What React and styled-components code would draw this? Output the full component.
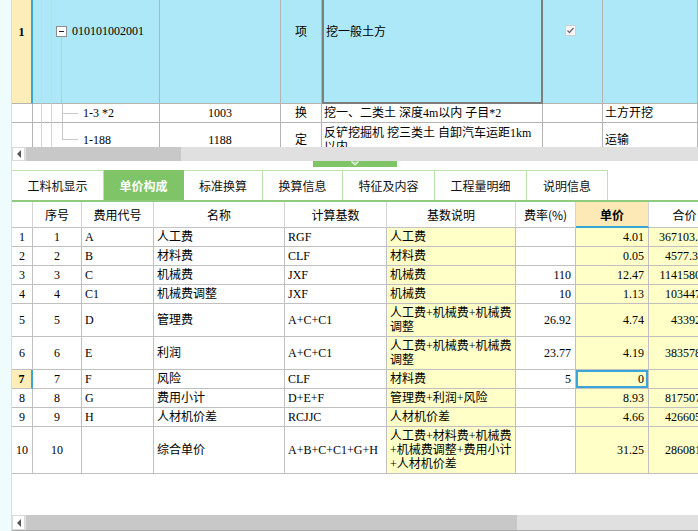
import React from 'react';
import styled, { createGlobalStyle, css } from 'styled-components';

const GlobalStyle = createGlobalStyle`
  html, body {
    margin: 0;
    padding: 0;
    background: #fff;
  }
  body {
    font-family: "Liberation Serif", "Noto Sans CJK SC", serif;
    font-size: 12px;
    color: #000;
  }
`;

const Screen = styled.div`
  display: flex;
  width: 698px;
  height: 531px;
  overflow: hidden;
`;

const SideStrip = styled.div`
  flex: none;
  width: 11px;
  background: #effcfd;
  border-right: 1px solid #d3dfe2;
`;

const Workspace = styled.div`
  flex: 1;
  min-width: 0;
  display: flex;
  flex-direction: column;
  overflow: hidden;
`;

/* ---------- upper tree grid ---------- */

const TopGrid = styled.div`
  flex: none;
  height: 147px;
  overflow: hidden;
`;

const TreeRow = styled.div`
  display: grid;
  grid-template-columns: 21px 9px 10px 108px 121px 41px 221px 60px 95px;
  height: ${p => p.$h}px;
  background: ${p => (p.$selected ? '#ade8f8' : '#fff')};
`;

const TCell = styled.div`
  display: flex;
  align-items: ${p => (p.$top ? 'flex-start' : 'center')};
  justify-content: ${p => (p.$center ? 'center' : 'flex-start')};
  padding: ${p => (p.$top ? '25px 2px 0' : '0 2px')};
  line-height: 14px;
  white-space: pre-line;
  overflow: hidden;
  border-right: 1px solid ${p => (p.$faint ? '#d4d4d4' : '#b4b4b4')};
  border-bottom: 1px solid #b4b4b4;
`;

const TreeRowHead = styled(TCell)`
  justify-content: center;
  padding: ${p => (p.$top ? '25px 0 0' : '0')};
  ${p => p.$current && css`
    background: #fdedb8;
    font-weight: bold;
    border-right: 2px solid #3aa6d8;
  `}
`;

const NameCell = styled(TCell)`
  ${p => p.$focused && css`
    border-left: 2px solid #7d7d7d;
    border-right: 2px solid #7d7d7d;
    border-bottom: 2px solid #7d7d7d;
  `}
`;

const CodeCell = styled.div`
  display: flex;
  align-items: ${p => (p.$top ? 'flex-start' : 'center')};
  padding-top: ${p => (p.$top ? 26 : 0)}px;
  border-right: 1px solid #b4b4b4;
  border-bottom: 1px solid #b4b4b4;
  overflow: hidden;
`;

const Expander = styled.div`
  align-self: stretch;
  display: flex;
  flex-direction: column;
  align-items: center;
  width: 11px;
  margin-left: 4px;
`;

const ToggleBox = styled.span`
  flex: none;
  display: flex;
  align-items: center;
  justify-content: center;
  width: 11px;
  height: 11px;
  box-sizing: border-box;
  border: 1px solid #8e8e8e;
  background: #fff;

  &::before {
    content: '';
    width: 5px;
    height: 1px;
    background: #222;
  }
`;

const Stem = styled.span`
  flex: 1;
  width: 1px;
  background: #c8c8c8;
`;

const Branch = styled.span`
  align-self: stretch;
  display: flex;
  flex-direction: column;
  width: 16px;
  margin-left: 10px;

  &::before {
    content: '';
    flex: 1;
    border-left: 1px solid #c8c8c8;
    border-bottom: 1px solid #c8c8c8;
  }
  &::after {
    content: '';
    flex: 1;
    border-left: 1px solid ${p => (p.$last ? 'transparent' : '#c8c8c8')};
  }
`;

const CodeText = styled.span`
  margin-left: ${p => p.$gap}px;
  line-height: ${p => (p.$top ? 11 : 14)}px;
  white-space: nowrap;
`;

const CheckCell = styled(TCell)`
  align-items: flex-start;
  justify-content: center;
  padding: 25px 4px 0 0;
`;

/* ---------- scrollbars / splitter ---------- */

const HScroll = styled.div`
  flex: none;
  display: flex;
  height: ${p => p.$h}px;
  background: #e0e0e0;
  border-bottom: ${p => (p.$edge ? '1px solid #a9a9a9' : 'none')};
`;

const ScrollArrow = styled.div`
  flex: none;
  display: flex;
  align-items: center;
  justify-content: center;
  width: 13px;
  box-sizing: border-box;
  background: #fff;
  border: 1px solid #dadada;

  &::before {
    content: '';
    border-right: 4px solid #555;
    border-top: 4px solid transparent;
    border-bottom: 4px solid transparent;
  }
`;

const ScrollThumb = styled.div`
  flex: none;
  width: ${p => p.$w}px;
  margin-left: 1px;
  background: #c8c8c8;
`;

const SplitterZone = styled.div`
  flex: none;
  display: flex;
  justify-content: center;
  height: 9px;
`;

const SplitterGrip = styled.div`
  display: flex;
  justify-content: center;
  width: 84px;
  height: 6px;
  background: #80c468;
`;

/* ---------- tabs ---------- */

const TabBar = styled.div`
  flex: none;
  display: flex;
  height: 30px;
  border-bottom: 2px solid #8fcb7c;
`;

const Tab = styled.div`
  flex: none;
  display: flex;
  align-items: center;
  justify-content: center;
  width: ${p => p.$w}px;
  box-sizing: border-box;
  border-top: 1px solid #b9e3ab;
  border-right: 1px solid #b9e3ab;
  font-family: "Noto Sans CJK SC", sans-serif;
  font-size: 12px;
  color: #111;

  ${p => p.$active && css`
    background: #80c468;
    border-top-color: #80c468;
    border-right-color: #80c468;
    color: #fff;
    font-weight: bold;
  `}
`;

/* ---------- detail table ---------- */

const COLS = '21px 49px 72px 131px 102px 129px 60px 73px 72px';

const Table = styled.div`
  flex: none;
  display: flex;
  flex-direction: column;
`;

const HeadRow = styled.div`
  display: grid;
  grid-template-columns: ${COLS};
  height: 26px;
`;

const HeadCell = styled.div`
  display: flex;
  align-items: center;
  justify-content: center;
  white-space: nowrap;
  overflow: hidden;
  font-family: "Noto Sans CJK SC", sans-serif;
  border-right: 1px solid #d4d4d4;
  border-bottom: 1px solid #c4c4c4;

  ${p => p.$current && css`
    background: #fde9b6;
    font-weight: bold;
    border-bottom: 2px solid #3aa6d8;
  `}
`;

const BodyRow = styled.div`
  display: grid;
  grid-template-columns: ${COLS};
`;

const justify = { left: 'flex-start', center: 'center', right: 'flex-end' };

const Cell = styled.div`
  display: flex;
  align-items: center;
  justify-content: ${p => justify[p.$align]};
  padding: 2px ${p => (p.$align === 'right' ? 4 : 2)}px 2px ${p => (p.$align === 'left' ? 3 : 2)}px;
  line-height: 14px;
  white-space: pre;
  overflow: hidden;
  background: ${p => (p.$tint ? '#ffffc8' : '#fff')};
  border-right: 1px solid #c0c0c0;
  border-bottom: 1px solid #c0c0c0;

  ${p => p.$focused && css`
    box-shadow: inset 0 0 0 2px #3aa6d8;
  `}
`;

const RowHead = styled(Cell)`
  ${p => p.$current && css`
    background: #fdedb8;
    font-weight: bold;
    border-right: 2px solid #3aa6d8;
  `}
`;

const Filler = styled.div`
  flex: 1;
`;

const CheckIcon = () => (
  <svg width="11" height="11" viewBox="0 0 11 11">
    <rect x="0.5" y="0.5" width="10" height="10" fill="#f6f6f8" stroke="#cfcfd4" />
    <polyline points="2.5,5.5 4.5,7.5 8.5,3" fill="none" stroke="#6a6a78" strokeWidth="1.3" />
  </svg>
);

const GripChevron = () => (
  <svg width="10" height="6" viewBox="0 0 10 6">
    <polyline points="1.5,0.5 5,4 8.5,0.5" fill="none" stroke="#e6f5df" strokeWidth="1.2" />
    <polyline points="3,0.5 5,2.5 7,0.5" fill="none" stroke="#e6f5df" strokeWidth="1" />
  </svg>
);

const tabs = [
  { label: '工料机显示', w: 92 },
  { label: '单价构成', w: 80, active: true },
  { label: '标准换算', w: 79 },
  { label: '换算信息', w: 80 },
  { label: '特征及内容', w: 92 },
  { label: '工程量明细', w: 92 },
  { label: '说明信息', w: 81 },
];

const columns = [
  { key: 'no', title: '序号', align: 'center' },
  { key: 'code', title: '费用代号', align: 'left' },
  { key: 'name', title: '名称', align: 'left' },
  { key: 'base', title: '计算基数', align: 'left' },
  { key: 'desc', title: '基数说明', align: 'left', tint: true },
  { key: 'rate', title: '费率(%)', align: 'right' },
  { key: 'price', title: '单价', align: 'right', tint: true, current: true },
  { key: 'total', title: '合价', align: 'right', tint: true },
];

const rows = [
  { no: '1', code: 'A', name: '人工费', base: 'RGF', desc: '人工费', rate: '', price: '4.01', total: '367103.462' },
  { no: '2', code: 'B', name: '材料费', base: 'CLF', desc: '材料费', rate: '', price: '0.05', total: '4577.3512' },
  { no: '3', code: 'C', name: '机械费', base: 'JXF', desc: '机械费', rate: '110', price: '12.47', total: '1141580.44' },
  { no: '4', code: 'C1', name: '机械费调整', base: 'JXF', desc: '机械费', rate: '10', price: '1.13', total: '103447.51' },
  { no: '5', code: 'D', name: '管理费', base: 'A+C+C1', desc: '人工费+机械费+机械费\n调整', rate: '26.92', price: '4.74', total: '433928.6' },
  { no: '6', code: 'E', name: '利润', base: 'A+C+C1', desc: '人工费+机械费+机械费\n调整', rate: '23.77', price: '4.19', total: '383578.32' },
  { no: '7', code: 'F', name: '风险', base: 'CLF', desc: '材料费', rate: '5', price: '0', total: '', current: true },
  { no: '8', code: 'G', name: '费用小计', base: 'D+E+F', desc: '管理费+利润+风险', rate: '', price: '8.93', total: '817507.12' },
  { no: '9', code: 'H', name: '人材机价差', base: 'RCJJC', desc: '人材机价差', rate: '', price: '4.66', total: '426605.34' },
  { no: '10', code: '', name: '综合单价', base: 'A+B+C+C1+G+H', desc: '人工费+材料费+机械费\n+机械费调整+费用小计\n+人材机价差', rate: '', price: '31.25', total: '2860812.5' },
];

export default function App() {
  return (
    <>
      <GlobalStyle />
      <Screen>
        <SideStrip />
        <Workspace>
          <TopGrid>
            <TreeRow $h={104} $selected>
              <TreeRowHead $top $current>1</TreeRowHead>
              <TCell $faint />
              <TCell $faint />
              <CodeCell $top>
                <Expander>
                  <ToggleBox />
                  <Stem />
                </Expander>
                <CodeText $gap={5} $top>010101002001</CodeText>
              </CodeCell>
              <TCell $top />
              <TCell $top $center>项</TCell>
              <NameCell $top $focused>挖一般土方</NameCell>
              <CheckCell>
                <CheckIcon />
              </CheckCell>
              <TCell $top />
            </TreeRow>

            <TreeRow $h={19}>
              <TreeRowHead />
              <TCell $faint />
              <TCell $faint />
              <CodeCell>
                <Branch />
                <CodeText $gap={5}>1-3 *2</CodeText>
              </CodeCell>
              <TCell $center>1003</TCell>
              <TCell $center>换</TCell>
              <NameCell>挖一、二类土 深度4m以内 子目*2</NameCell>
              <TCell />
              <TCell>土方开挖</TCell>
            </TreeRow>

            <TreeRow $h={34}>
              <TreeRowHead />
              <TCell $faint />
              <TCell $faint />
              <CodeCell>
                <Branch $last />
                <CodeText $gap={5}>1-188</CodeText>
              </CodeCell>
              <TCell $center>1188</TCell>
              <TCell $center>定</TCell>
              <NameCell>{'反铲挖掘机 挖三类土 自卸汽车运距1km\n以内'}</NameCell>
              <TCell />
              <TCell>运输</TCell>
            </TreeRow>
          </TopGrid>

          <HScroll $h={14}>
            <ScrollArrow />
            <ScrollThumb $w={155} />
          </HScroll>

          <SplitterZone>
            <SplitterGrip>
              <GripChevron />
            </SplitterGrip>
          </SplitterZone>

          <TabBar>
            {tabs.map(t => (
              <Tab key={t.label} $w={t.w} $active={t.active}>
                {t.label}
              </Tab>
            ))}
          </TabBar>

          <Table>
            <HeadRow>
              <HeadCell />
              {columns.map(c => (
                <HeadCell key={c.key} $current={c.current}>
                  {c.title}
                </HeadCell>
              ))}
            </HeadRow>
            {rows.map((r, i) => (
              <BodyRow key={r.no}>
                <RowHead $align="center" $current={r.current}>
                  {i + 1}
                </RowHead>
                {columns.map(c => (
                  <Cell
                    key={c.key}
                    $align={c.align}
                    $tint={c.tint}
                    $focused={r.current && c.current}
                  >
                    {r[c.key]}
                  </Cell>
                ))}
              </BodyRow>
            ))}
          </Table>

          <Filler />

          <HScroll $h={15} $edge>
            <ScrollArrow />
            <ScrollThumb $w={491} />
          </HScroll>
        </Workspace>
      </Screen>
    </>
  );
}
